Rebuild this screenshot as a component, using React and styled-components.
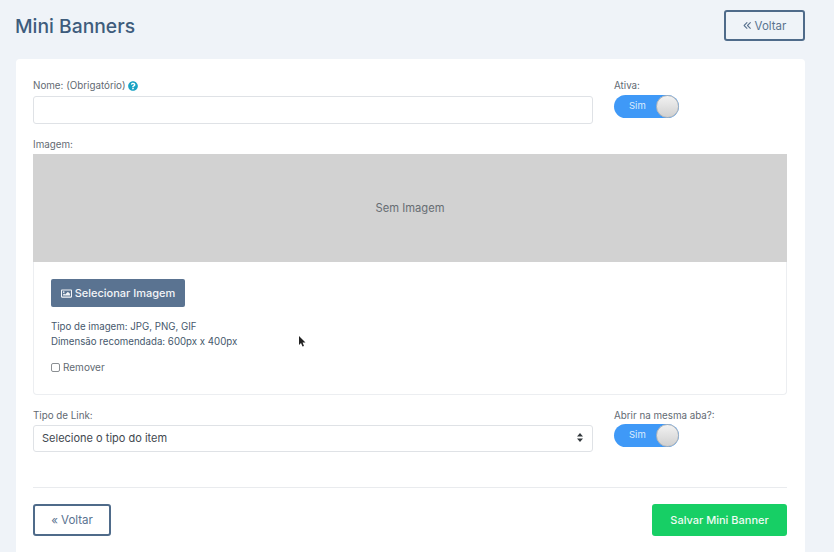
import React from 'react';
import styled, { createGlobalStyle } from 'styled-components';
import { FaQuestionCircle, FaRegImage } from 'react-icons/fa';
import { FaAnglesLeft } from 'react-icons/fa6';

const GlobalStyle = createGlobalStyle`
  html, body {
    margin: 0;
    padding: 0;
    height: 552px;
    overflow: hidden;
    background: #eff3f8;
    font-family: Inter, "Liberation Sans", sans-serif;
  }
  * { box-sizing: border-box; }
`;

const Page = styled.div`
  position: relative;
  width: 834px;
  height: 552px;
  padding: 10px 29px 0 16px;
  overflow: hidden;
`;

const Header = styled.header`
  display: flex;
  justify-content: space-between;
  align-items: flex-start;
  height: 49px;
`;

const Title = styled.h1`
  margin: 3px 0 0 -1px;
  font-size: 19.3px;
  line-height: 26px;
  font-weight: 500;
  color: #3e5c7c;
`;

const OutlineButton = styled.button`
  display: flex;
  align-items: center;
  justify-content: center;
  gap: 3px;
  width: ${(p) => p.$width}px;
  height: ${(p) => p.$height}px;
  padding: 0;
  background: transparent;
  border: 2px solid #4f6b8a;
  border-radius: 3px;
  font-family: inherit;
  font-size: 11.5px;
  color: #5a7390;
`;

const Card = styled.main`
  background: #fff;
  border-radius: 4px;
  padding: 20px 18px 0 17px;
  height: 520px;
`;

const FormRow = styled.div`
  display: grid;
  grid-template-columns: 560px 1fr;
  column-gap: 21px;
`;

const Field = styled.div`
  display: flex;
  flex-direction: column;
`;

const Label = styled.label`
  display: flex;
  align-items: center;
  gap: 3px;
  height: 12px;
  padding-top: 2px;
  margin-bottom: 5px;
  font-size: 9.8px;
  line-height: 12px;
  color: #626a72;
`;

const TightLabel = styled(Label)`
  margin-bottom: 4px;
`;

const HelpIcon = styled(FaQuestionCircle)`
  width: 10px;
  height: 10px;
  color: #1aa3c4;
`;

const TextInput = styled.input`
  width: 100%;
  height: 28px;
  background: #fff;
  border: 1px solid #dfe2e6;
  border-radius: 3px;
`;

const Toggle = styled.div`
  position: relative;
  width: 65px;
  height: 23px;
  margin-top: -1px;
  border-radius: 12px;
  background: #3f99f7;
  color: #dcecfd;
  font-size: 9.5px;
  line-height: 22px;
  padding-left: 15px;
`;

const Knob = styled.span`
  position: absolute;
  top: 0;
  right: 0;
  width: 23px;
  height: 23px;
  border-radius: 50%;
  border: 1px solid #b4b6b8;
  background: linear-gradient(#f2f2f2, #d0d0d0);
`;

const ImageSection = styled.section`
  margin-top: 14px;
`;

const Placeholder = styled.div`
  display: flex;
  align-items: center;
  justify-content: center;
  height: 108px;
  background: #d2d2d2;
  font-size: 11.2px;
  color: #676d72;
`;

const ImagePanel = styled.div`
  height: 133px;
  padding: 17px 17px 0;
  border: 1px solid #eceef1;
  border-top: 0;
  border-radius: 0 0 4px 4px;
`;

const PrimaryButton = styled.button`
  display: flex;
  align-items: center;
  justify-content: center;
  gap: 3px;
  width: 134px;
  height: 28px;
  padding: 0;
  background: #5a7391;
  border: 0;
  border-radius: 2px;
  font-family: inherit;
  font-size: 11px;
  font-weight: 500;
  color: #f3f5f8;
`;

const HintText = styled.p`
  margin: ${(p) => p.$top}px 0 0;
  font-size: 9.7px;
  line-height: 15px;
  color: #46586c;
`;

const CheckLabel = styled.label`
  display: flex;
  align-items: center;
  gap: 3px;
  margin-top: 12px;
  font-size: 10px;
  line-height: 13px;
  color: #626a72;
`;

const CheckBox = styled.span`
  width: 9px;
  height: 9px;
  border: 1px solid #8b8f93;
  border-radius: 2px;
  background: #fff;
`;

const LinkRow = styled(FormRow)`
  margin-top: 14px;
`;

const SelectBox = styled.div`
  display: flex;
  align-items: center;
  justify-content: space-between;
  height: 27px;
  padding: 0 9px 2px 8px;
  border: 1px solid #dfe2e6;
  border-radius: 3px;
  font-size: 11px;
  color: #42484f;
`;

const Divider = styled.hr`
  margin: 35px 0 16px;
  border: 0;
  border-top: 1px solid #e9ebee;
`;

const Footer = styled.footer`
  display: flex;
  justify-content: space-between;
`;

const SaveButton = styled.button`
  width: 135px;
  height: 32px;
  padding: 0;
  background: #17cf65;
  border: 0;
  border-radius: 3px;
  font-family: inherit;
  font-size: 11px;
  font-weight: 500;
  color: #eefbf3;
`;

const CursorMark = styled.svg`
  position: absolute;
  left: 299px;
  top: 336px;
`;

const SwitchOn = () => (
  <Toggle>
    Sim
    <Knob />
  </Toggle>
);

export default function App() {
  return (
    <Page>
      <GlobalStyle />
      <Header>
        <Title>Mini Banners</Title>
        <OutlineButton $width={81} $height={31}>
          <FaAnglesLeft size={9} /> Voltar
        </OutlineButton>
      </Header>
      <Card>
        <FormRow>
          <Field>
            <Label>Nome: (Obrigatório) <HelpIcon /></Label>
            <TextInput />
          </Field>
          <Field>
            <Label>Ativa:</Label>
            <SwitchOn />
          </Field>
        </FormRow>
        <ImageSection>
          <TightLabel>Imagem:</TightLabel>
          <Placeholder>Sem Imagem</Placeholder>
          <ImagePanel>
            <PrimaryButton>
              <FaRegImage size={11} /> Selecionar Imagem
            </PrimaryButton>
            <HintText $top={12}>
              Tipo de imagem: JPG, PNG, GIF<br />
              Dimensão recomendada: 600px x 400px
            </HintText>
            <CheckLabel><CheckBox /> Remover</CheckLabel>
          </ImagePanel>
        </ImageSection>
        <LinkRow>
          <Field>
            <TightLabel>Tipo de Link:</TightLabel>
            <SelectBox>
              Selecione o tipo do item
              <svg width="6" height="9" viewBox="0 0 6 9">
                <path d="M3 0 6 3.4H0zM3 9 0 5.6h6z" fill="#33383d" />
              </svg>
            </SelectBox>
          </Field>
          <Field>
            <TightLabel>Abrir na mesma aba?:</TightLabel>
            <SwitchOn />
          </Field>
        </LinkRow>
        <Divider />
        <Footer>
          <OutlineButton $width={78} $height={32}>« Voltar</OutlineButton>
          <SaveButton>Salvar Mini Banner</SaveButton>
        </Footer>
      </Card>
      <CursorMark width="8" height="11" viewBox="0 0 8 11">
        <path d="M0 0v9l2-2 1.5 3.5 1.5-.6L3.6 6.5H6.5z" fill="#222" />
      </CursorMark>
    </Page>
  );
}
